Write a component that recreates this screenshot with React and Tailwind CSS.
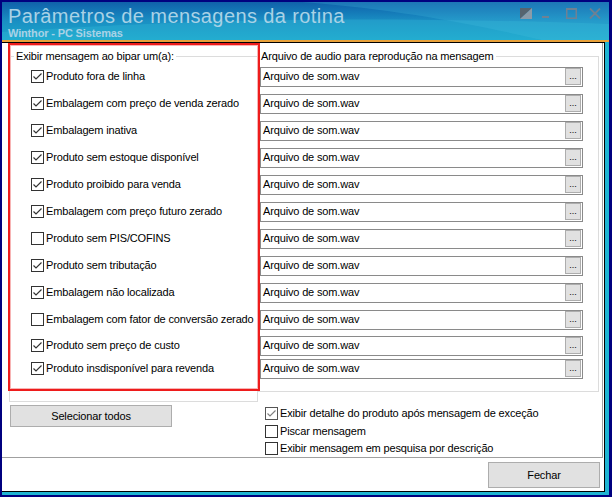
import React from 'react';

// itens de mensagem
const items = [
  { label: 'Produto fora de linha', checked: true },
  { label: 'Embalagem com preço de venda zerado', checked: true },
  { label: 'Embalagem inativa', checked: true },
  { label: 'Produto sem estoque disponível', checked: true },
  { label: 'Produto proibido para venda', checked: true },
  { label: 'Embalagem com preço futuro zerado', checked: true },
  { label: 'Produto sem PIS/COFINS', checked: false },
  { label: 'Produto sem tributação', checked: true },
  { label: 'Embalagem não localizada', checked: true },
  { label: 'Embalagem com fator de conversão zerado', checked: false },
  { label: 'Produto sem preço de custo', checked: true },
  { label: 'Produto insdisponível para revenda', checked: true },
];

const rowHeight = (i) => (i < 10 ? 'h-[27px]' : i === 10 ? 'h-[25px]' : 'h-[21px]');

const CheckBox = ({ checked, light }) => (
  <span className={`w-[13px] h-[13px] shrink-0 border bg-white flex items-center justify-center ${light ? 'border-[#555]' : 'border-[#333]'}`}>
    {checked && (
      <svg width="11" height="11" viewBox="0 0 11 11">
        <path d="M1.5 5.5 L4 8 L9.5 2.5" fill="none" stroke={light ? '#808080' : '#333'} strokeWidth="1.2" />
      </svg>
    )}
  </span>
);

const TitleBar = () => (
  <div className="relative h-[38px] flex justify-between overflow-hidden bg-gradient-to-b from-[#1160aa] via-[#1a8fc3] to-[#1ba8cc]">
    <svg className="absolute inset-0" width="607" height="38" viewBox="0 0 607 38">
      <path d="M0 30 C 150 20, 320 12, 607 22 L607 38 L0 38 Z" fill="#34b8d8" opacity="0.35" />
      <path d="M300 0 C 400 8, 470 22, 540 38 L607 38 L607 0 Z" fill="#4fc3e2" opacity="0.22" />
    </svg>
    <div className="relative pl-[6px] pt-[3px] text-[#a9d2e6]">
      <div className="text-[20px] leading-[22px] tracking-[0.4px]">Parâmetros de mensagens da rotina</div>
      <div className="text-[11px] leading-[12px] font-bold">Winthor - PC Sistemas</div>
    </div>
    <div className="relative flex items-start pt-[6px] pr-[8px]">
      <svg width="12" height="11" viewBox="0 0 12 11">
        <polygon points="0,0 12,0 0,11" fill="#56646f" />
        <polygon points="12,0 12,11 0,11" fill="#8b9ba8" />
      </svg>
      <svg className="ml-[10px]" width="7" height="11" viewBox="0 0 7 11">
        <rect x="0" y="8" width="7" height="2" fill="#6f8193" />
      </svg>
      <svg className="ml-[17px]" width="11" height="11" viewBox="0 0 11 11">
        <rect x="0.75" y="1" width="9.5" height="9.25" fill="none" stroke="#6f8193" strokeWidth="1.5" />
        <rect x="0" y="0" width="11" height="2" fill="#6f8193" />
      </svg>
      <svg className="ml-[12px]" width="12" height="11" viewBox="0 0 12 11">
        <path d="M1 0.5 L11 10.5 M11 0.5 L1 10.5" stroke="#6f8193" strokeWidth="1.8" />
      </svg>
    </div>
  </div>
);

export default function App() {
  return (
    <div className="w-[612px] h-[497px] bg-[#00007f] pt-[2px] pl-[2px] pr-[3px] pb-[2px] flex flex-col font-['Liberation_Sans',Arial,sans-serif] text-[11px] tracking-[-0.15px] text-black">
      <TitleBar />
      <div className="h-[2px] bg-[#e8a13a]" />
      <div className="flex-1 flex flex-col border-r-[4px] border-b-[3px] border-[#1fb4d2]">
        <div className="flex-1 flex flex-col bg-white border-t border-r border-b border-black">
          {/* painel principal */}
          <div className="relative h-[415px] w-[601px] border-r border-b border-[#a0a0a0] pt-[7px]">
            <div className="flex items-start">
              <fieldset className="ml-[7px] w-[249px] h-[352px] border border-[#dcdcdc]">
                <legend className="ml-[4px] px-[2px] leading-[13px]">Exibir mensagem ao bipar um(a):</legend>
                {items.map((it, i) => (
                  <div key={it.label} className={`${rowHeight(i)} flex items-center pl-[21px]`}>
                    <CheckBox checked={it.checked} />
                    <span className="ml-[2px] leading-[13px] whitespace-nowrap">{it.label}</span>
                  </div>
                ))}
              </fieldset>
              <fieldset className="w-[341px] h-[342px] border border-[#dcdcdc]">
                <legend className="px-[2px] leading-[13px]">Arquivo de audio para reprodução na mensagem</legend>
                {items.map((it, i) => (
                  <div key={it.label} className={`${rowHeight(i)} flex items-center pl-[1px]`}>
                    <div className="w-[323px] h-[20px] border border-[#8a8a8a] flex items-center justify-between pl-[2px] pr-[1px]">
                      <span className="leading-[13px]">Arquivo de som.wav</span>
                      <span className="w-[16px] h-[17px] bg-[#e1e1e1] border border-[#adadad] flex items-end justify-center pb-[3px] text-[9px] leading-none tracking-normal">...</span>
                    </div>
                  </div>
                ))}
              </fieldset>
            </div>

            <div className="flex items-start">
              <button className="ml-[8px] mt-[3px] w-[162px] h-[22px] bg-[#e1e1e1] border border-[#adadad] text-[11px] leading-[13px]">
                Selecionar todos
              </button>
              <div className="ml-[93px] mt-[2px] flex flex-col">
                <div className="h-[18px] flex items-center">
                  <CheckBox checked light />
                  <span className="ml-[2px] leading-[13px]">Exibir detalhe do produto após mensagem de exceção</span>
                </div>
                <div className="h-[18px] flex items-center">
                  <CheckBox checked={false} />
                  <span className="ml-[2px] leading-[13px]">Piscar mensagem</span>
                </div>
                <div className="h-[17px] flex items-center">
                  <CheckBox checked={false} />
                  <span className="ml-[2px] leading-[13px]">Exibir mensagem em pesquisa por descrição</span>
                </div>
              </div>
            </div>

            {/* destaque */}
            <div className="absolute left-[6px] top-0 w-[252px] h-[348px] border-2 border-[#ee1c1c] shadow-[inset_0_0_0_1px_#f7b4b4] pointer-events-none" />
          </div>

          <div className="flex justify-end pr-[4px] pt-[4px]">
            <button className="w-[112px] h-[26px] bg-[#e1e1e1] border border-[#adadad] text-[11px] leading-[13px]">Fechar</button>
          </div>
        </div>
      </div>
    </div>
  );
}
